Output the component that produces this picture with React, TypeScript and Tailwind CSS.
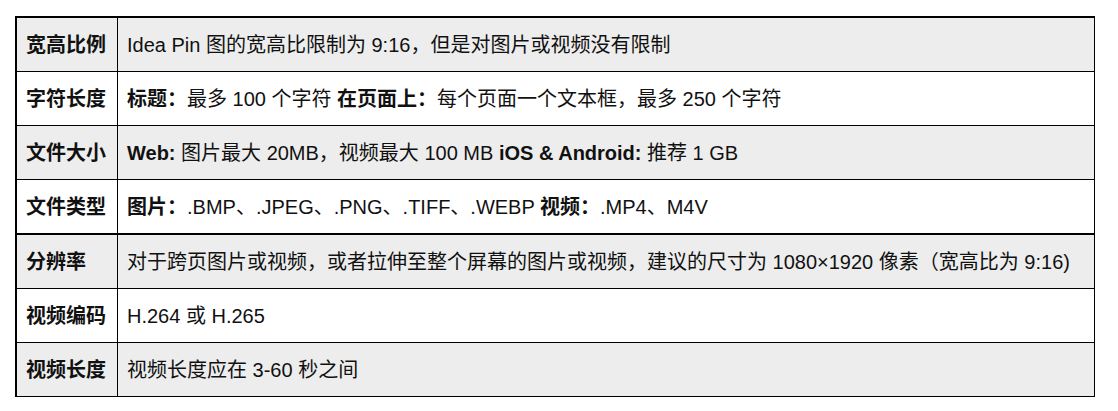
import React from 'react';

type Row = {
  label: string;
  value: React.ReactNode;
  thick?: boolean;
};

const rows: Row[] = [
  { label: '宽高比例', value: 'Idea Pin 图的宽高比限制为 9:16，但是对图片或视频没有限制' },
  {
    label: '字符长度',
    value: (
      <>
        <b>标题：</b>最多 100 个字符 <b>在页面上：</b>每个页面一个文本框，最多 250 个字符
      </>
    ),
  },
  {
    label: '文件大小',
    value: (
      <>
        <b>Web:</b> 图片最大 20MB，视频最大 100 MB <b>iOS &amp; Android:</b> 推荐 1 GB
      </>
    ),
  },
  {
    label: '文件类型',
    value: (
      <>
        <b>图片：</b>.BMP、.JPEG、.PNG、.TIFF、.WEBP <b>视频：</b>.MP4、M4V
      </>
    ),
    thick: true,
  },
  { label: '分辨率', value: '对于跨页图片或视频，或者拉伸至整个屏幕的图片或视频，建议的尺寸为 1080×1920 像素（宽高比为 9:16)' },
  { label: '视频编码', value: 'H.264 或 H.265' },
  { label: '视频长度', value: '视频长度应在 3-60 秒之间' },
];

const App = () => {
  return (
    <div className="min-h-screen bg-white pl-[15px] pt-[16px]">
      <div
        className="w-[1080px] border-t-2 border-l-2 border-r border-black text-[20px] text-[#111] leading-none"
        style={{ fontFamily: '"Liberation Sans", "Noto Sans CJK SC", sans-serif' }}
      >
        {rows.map((row, i) => (
          <div
            key={row.label}
            className={`flex border-black ${row.thick ? 'h-[55px] border-b-2' : 'h-[54px] border-b'} ${
              i % 2 === 0 ? 'bg-[#ededed]' : 'bg-white'
            }`}
          >
            <div className="flex w-[101px] shrink-0 items-center border-r border-black pl-[9px] font-bold">
              {row.label}
            </div>
            <div className="flex flex-1 items-center pl-[9px] whitespace-pre">
              <span>{row.value}</span>
            </div>
          </div>
        ))}
      </div>
    </div>
  );
};

export default App;
